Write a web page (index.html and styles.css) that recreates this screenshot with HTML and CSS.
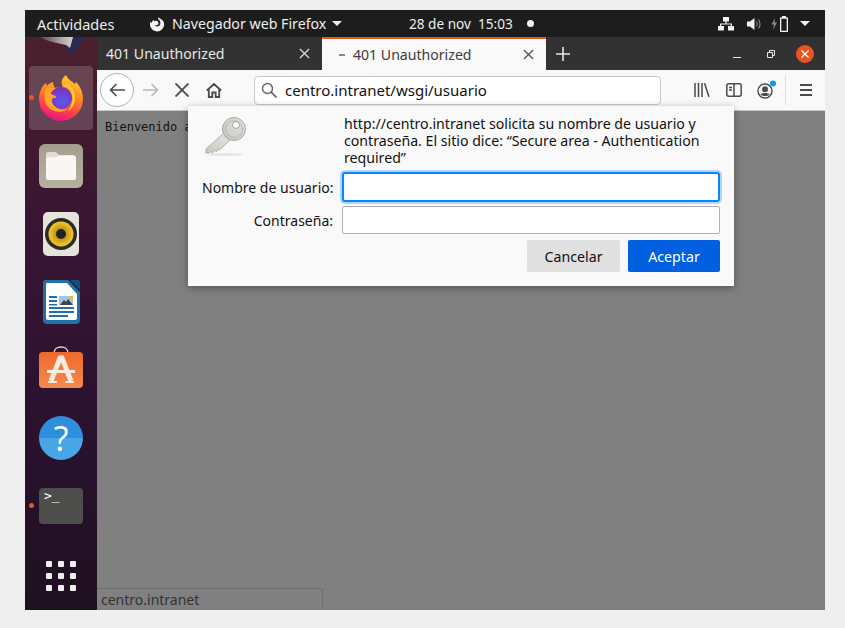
FILE: index.html
```html
<!DOCTYPE html>
<html lang="es">
<head>
    <meta charset="UTF-8">
    <title>401 Unauthorized</title>
    <link rel="stylesheet" href="styles.css">
</head>
<body>
<div class="screen">
    <div class="topbar">
        <span class="activities">Actividades</span>
        <div class="app-menu">
            <svg class="app-icon" width="16" height="16" viewBox="0 0 18 18">
                <path fill="#f2f2f2" d="M9 1.2c.5 1 1.6 1.5 2.4 1.6 1.9 1.2 4.6 3 4.6 6.4a8 8 0 1 1-15.4-2.9c.2 1.100.6 1.500 1.100 1.700.5-2 1.600-3.100 3.100-3.800-.6.700-.7 1.400-.4 2 .7-.8 2.300-1 3.500-.5 1.500.6 2 2.300 1.300 3.600-.8 1.300-2.800 1.700-4.100.8 1.100 2 4.300 2.300 5.800.4 1.700-2.200.7-5.600-1.900-7.100.2-.8.400-1.500.4-2.200z"/>
            </svg>
            <span>Navegador web Firefox</span>
            <span class="caret"></span>
        </div>
        <div class="clock">
            <span>28 de nov&nbsp;&nbsp;15:03</span>
            <span class="clock-dot"></span>
        </div>
        <div class="tray">
            <svg width="16" height="14" viewBox="0 0 16 14"><path fill="#f2f2f2" d="M5 0h6v4.500H8.600V6.500H14v2.500h2v4.500h-6V9h2.800V7.600H3.200V9H6v4.500H0V9h2V6.500h5.400v-2H5z"/></svg>
            <svg width="16" height="14" viewBox="0 0 16 14"><path fill="#f2f2f2" d="M0 4.500h3L7.500 1v12L3 9.500H0z"/><path fill="none" stroke="#8f8f8f" stroke-width="1.100" d="M9.500 4.500c1 1.500 1 3.500 0 5M11.500 2.500c2 2.500 2 6.500 0 9"/></svg>
            <svg class="battery" width="20" height="16" viewBox="0 0 20 16"><path fill="#8a8a8a" d="M4 2 .5 8.500H3L2 14l4-7.500H3.500z"/><path fill="#f2f2f2" fill-rule="evenodd" d="M11 0h4v1.500h2V16H9V1.500h2zM10.300 2.800v11.900h5.400V2.800z"/></svg>
            <span class="caret tray-caret"></span>
        </div>
    </div>

    <div class="desktop">
        <nav class="dock">
            <svg class="dock-peek" width="46" height="16" viewBox="0 0 46 16">
                <defs>
                    <linearGradient id="peekFill" x1="0" y1="0" x2="1" y2="0">
                        <stop offset="0" stop-color="#5d3a48"/>
                        <stop offset="0.6" stop-color="#a89ea2"/>
                        <stop offset="1" stop-color="#d8d2d2"/>
                    </linearGradient>
                </defs>
                <path fill="#2b2a55" d="M28 0h18c-2 7-7 13-14 15-3 0-4-1-5-3 3-3 4-8 1-12z"/>
                <path fill="url(#peekFill)" d="M2 0h33l-3 11-4-3C19 6 8 4 2 0z"/>
            </svg>

            <div class="dock-item active">
                <span class="run-dot"></span>
                <svg width="44" height="46" viewBox="0 0 44 46">
                    <defs>
                        <linearGradient id="ffBody" x1="0.7" y1="0" x2="0.4" y2="1">
                            <stop offset="0" stop-color="#ffd02e"/>
                            <stop offset="0.45" stop-color="#ff8324"/>
                            <stop offset="0.75" stop-color="#ff3e4c"/>
                            <stop offset="1" stop-color="#e31587"/>
                        </linearGradient>
                        <radialGradient id="ffGlobe" cx="0.55" cy="0.65" r="0.65">
                            <stop offset="0" stop-color="#5b5be6"/>
                            <stop offset="0.6" stop-color="#6f3fd6"/>
                            <stop offset="1" stop-color="#8a2cb0"/>
                        </radialGradient>
                    </defs>
                    <path fill="url(#ffBody)" d="M27 0c2 5 6 6 9 9l1-2c4 4 7 10 7 17a22 22 0 0 1-44 0C0 17 3 11 7 8l1 3c1-2 3-3 6-4 0 2 1 4 2 6 3-1 6-1 8-1-3-4-1-9 3-12z"/>
                    <circle cx="22" cy="23" r="11" fill="url(#ffGlobe)"/>
                    <path fill="#ffa62b" d="M7 14c3-2 7-1 9 0-4 2-5 3-4 5 3 1 6 2 5 4-3-1-5 1-4 4 2 6 9 9 16 7-7 5-18 3-22-5-2-5-2-11 0-15z"/>
                    <path fill="#ffc42e" d="M27 8c6 3 10 9 9 17-1 6-4 10-7 11 4-6 5-11 4-16-1-5-4-9-9-9z"/>
                </svg>
            </div>

            <div class="dock-item">
                <svg width="44" height="44" viewBox="0 0 44 44">
                    <defs>
                        <linearGradient id="filesFill" x1="0" y1="0" x2="0" y2="1"><stop offset="0" stop-color="#a39e8e"/><stop offset="1" stop-color="#b5b0a0"/></linearGradient>
                    </defs>
                    <rect width="44" height="44" rx="6" fill="url(#filesFill)"/>
                    <path fill="#dedbd0" d="M7 10a2 2 0 0 1 2-2h8l3 3h15v6H7z"/>
                    <path fill="#f8f7f5" d="M7 15a2 2 0 0 1 2-1.500l8-.5 3-1.500h15a2 2 0 0 1 2 2V34a2 2 0 0 1-2 2H9a2 2 0 0 1-2-2z"/>
                </svg>
            </div>

            <div class="dock-item">
                <svg width="36" height="44" viewBox="0 0 36 44">
                    <defs>
                        <radialGradient id="coneFill"><stop offset="0.3" stop-color="#b98d10"/><stop offset="1" stop-color="#f5ca2c"/></radialGradient>
                    </defs>
                    <rect width="36" height="44" rx="5" fill="#e6e3da"/>
                    <circle cx="18" cy="22" r="16" fill="#2b2b2b"/>
                    <circle cx="18" cy="22" r="12.500" fill="url(#coneFill)"/>
                    <circle cx="18" cy="22" r="5" fill="#222"/>
                </svg>
            </div>

            <div class="dock-item">
                <svg width="37" height="44" viewBox="0 0 37 44">
                    <path fill="#1f72a8" d="M3 0h22l12 12v28a4 4 0 0 1-4 4H4a4 4 0 0 1-4-4V3a3 3 0 0 1 3-3z"/>
                    <path fill="#114f7d" d="M27 0h8a2 2 0 0 1 2 2v8z"/>
                    <path fill="#fff" d="M4 3h20l10 11v24a2 2 0 0 1-2 2H5a2 2 0 0 1-2-2V4z"/>
                    <path fill="#1f72a8" d="M6 16h8v2H6zM6 20h8v2H6zM6 24h8v1.500H6zM6 27h25v2H6zM6 31h25v2H6zM6 35h19v2H6z"/>
                    <rect x="16" y="16" width="14" height="9" fill="#9fc7e4"/>
                    <path fill="#444" d="M17 25l4-5 2 2 2-3 5 6z"/>
                    <rect x="27" y="16" width="3" height="3" fill="#f2b632"/>
                </svg>
            </div>

            <div class="dock-item software">
                <svg width="44" height="42" viewBox="0 0 44 42">
                    <defs>
                        <linearGradient id="bagFill" x1="0" y1="0" x2="0" y2="1"><stop offset="0" stop-color="#ee6a2b"/><stop offset="1" stop-color="#f58a4e"/></linearGradient>
                    </defs>
                    <path fill="none" stroke="#f2d6b8" stroke-width="1.500" d="M15 7c0-8 14-8 14 0"/>
                    <rect y="6" width="44" height="36" rx="4" fill="url(#bagFill)"/>
                    <path fill="none" stroke="#fbe9df" stroke-width="5" d="M12 35 21 12h2l9 23"/>
                    <path fill="#fbe9df" d="M8 24h28v3H8zM9 35h9v2H9zM26 35h9v2h-9z"/>
                </svg>
            </div>

            <div class="dock-item">
                <div class="help-icon">?</div>
            </div>

            <div class="dock-item">
                <span class="run-dot"></span>
                <div class="term-icon">&gt;_</div>
            </div>

            <div class="apps-grid">
                <span></span><span></span><span></span>
                <span></span><span></span><span></span>
                <span></span><span></span><span></span>
            </div>
        </nav>

        <main class="browser">
            <div class="tabbar">
                <div class="tab">
                    <span class="tab-title">401 Unauthorized</span>
                    <svg class="tab-x" width="11" height="11" viewBox="0 0 12 12"><path stroke="#d5d5d5" stroke-width="1.500" d="M1 1l10 10M11 1 1 11"/></svg>
                </div>
                <div class="tab selected">
                    <span class="tab-busy"></span>
                    <span class="tab-title">401 Unauthorized</span>
                    <svg class="tab-x" width="11" height="11" viewBox="0 0 12 12"><path stroke="#555" stroke-width="1.500" d="M1 1l10 10M11 1 1 11"/></svg>
                </div>
                <svg class="new-tab" width="14" height="14" viewBox="0 0 14 14"><path stroke="#e8e8e8" stroke-width="1.600" d="M7 0v14M0 7h14"/></svg>
                <div class="win-controls">
                    <svg width="8" height="8" viewBox="0 0 8 8"><path stroke="#e8e8e8" d="M0 7.500h8"/></svg>
                    <svg width="8" height="8" viewBox="0 0 8 8"><path fill="none" stroke="#e8e8e8" d="M.5 2.500h5v5h-5zM2.500 2V.5h5v5H6"/></svg>
                    <div class="win-close">
                        <svg width="8" height="8" viewBox="0 0 8 8"><path stroke="#fff" stroke-width="1.200" d="M.5.5l7 7M7.500.5l-7 7"/></svg>
                    </div>
                </div>
            </div>

            <div class="toolbar">
                <div class="back-btn">
                    <svg width="16" height="14" viewBox="0 0 16 14"><path fill="none" stroke="#4a4a4f" stroke-width="1.600" d="M16 7H1.500M7.500 1l-6 6 6 6"/></svg>
                </div>
                <svg class="tool-forward" width="16" height="14" viewBox="0 0 16 14"><path fill="none" stroke="#b8b8b8" stroke-width="1.600" d="M0 7h14.500M8.500 1l6 6-6 6"/></svg>
                <svg class="tool-stop" width="14" height="14" viewBox="0 0 14 14"><path stroke="#4a4a4f" stroke-width="1.800" d="M.5.500l13 13M13.500.500l-13 13"/></svg>
                <svg class="tool-home" width="16" height="15" viewBox="0 0 16 15"><path fill="none" stroke="#4a4a4f" stroke-width="1.800" d="M.8 7.500 8 1l7.200 6.500M2.800 6.500V14h3.500V9.500h3.400V14h3.500V6.500"/></svg>
                <div class="urlbar">
                    <svg width="16" height="16" viewBox="0 0 16 16"><circle cx="6.500" cy="6.500" r="5" fill="none" stroke="#6a6a6a" stroke-width="1.500"/><path stroke="#6a6a6a" stroke-width="1.800" d="m10 10 5.500 5.500"/></svg>
                    <span>centro.intranet/wsgi/usuario</span>
                </div>
                <div class="tool-right">
                    <svg width="16" height="14" viewBox="0 0 16 14"><path stroke="#4a4a4f" stroke-width="1.500" d="M1 0v14M4.500 0v14M8 0v14M10.500.300l4.500 13.500"/></svg>
                    <svg class="tool-sidebar" width="16" height="14" viewBox="0 0 16 14"><rect x=".8" y=".8" width="14.400" height="12.400" rx="2" fill="none" stroke="#4a4a4f" stroke-width="1.500"/><path stroke="#4a4a4f" stroke-width="1.500" d="M8 1v12M3 4.500h3M3 7h3"/></svg>
                    <svg class="tool-account" width="20" height="20" viewBox="0 0 20 20"><circle cx="8" cy="11" r="7" fill="none" stroke="#4a4a4f" stroke-width="1.400"/><circle cx="8" cy="9.300" r="3" fill="#4a4a4f"/><path fill="#4a4a4f" d="M3.500 14.500c1-2 8-2 9 0-2 2-7 2-9 0z"/><circle cx="16" cy="3.500" r="3" fill="#0a9bf0"/></svg>
                    <span class="tool-sep"></span>
                    <svg class="tool-menu" width="12" height="12" viewBox="0 0 12 12"><path stroke="#4a4a4f" stroke-width="1.800" d="M0 1h12M0 6h12M0 11h12"/></svg>
                </div>
            </div>

            <div class="content">
                <pre class="page-text">Bienvenido a</pre>

                <div class="auth-dialog">
                    <div class="key-cell">
                        <svg width="50" height="50" viewBox="0 0 50 50">
                            <defs>
                                <linearGradient id="keyFill" x1="1" y1="0" x2="0" y2="1"><stop offset="0" stop-color="#e6e6e2"/><stop offset="1" stop-color="#c9c9c3"/></linearGradient>
                            </defs>
                            <ellipse cx="24" cy="42.500" rx="18" ry="1.500" fill="#e4e4e4"/>
                            <path fill="url(#keyFill)" stroke="#a0a09a" stroke-width=".8" d="M24 20 5 37v4h3l1.500-1.500L11.500 41l2-2.500 2 1L17 37l2 .5L30 27z"/>
                            <circle cx="33" cy="17" r="11.500" fill="url(#keyFill)" stroke="#a5a5a0"/>
                            <circle cx="33" cy="17" r="8.500" fill="none" stroke="#b5b5b0" stroke-width="2" stroke-dasharray="1 1"/>
                            <circle cx="35" cy="13" r="3.500" fill="#f9f9f9" stroke="#8f8f8a" stroke-width=".8"/>
                        </svg>
                    </div>
                    <p class="auth-msg">http://centro.intranet solicita su nombre de usuario y contraseña. El sitio dice: “Secure area - Authentication required”</p>
                    <label class="auth-label" for="user">Nombre de usuario:</label>
                    <input class="auth-input focused" id="user" type="text">
                    <label class="auth-label" for="pass">Contraseña:</label>
                    <input class="auth-input" id="pass" type="text">
                    <div class="auth-buttons">
                        <button class="btn">Cancelar</button>
                        <button class="btn primary">Aceptar</button>
                    </div>
                </div>

                <div class="status-panel">centro.intranet</div>
            </div>
        </main>
    </div>
</div>
</body>
</html>
```

FILE: styles.css
```css
* { box-sizing: border-box; }
html, body { margin: 0; height: 100%; }
body {
    background-color: #efefef;
    padding: 10px 20px 18px 25px;
    font-family: "Noto Sans", "Open Sans", sans-serif;
    font-size: 14px;
    overflow: hidden;
}
.screen { width: 800px; height: 600px; display: flex; flex-direction: column; overflow: hidden; }

/* top bar */
.topbar {
    height: 27px;
    flex: none;
    background-color: #1d1d1d;
    color: #eeeeec;
    display: flex;
    align-items: center;
    padding-left: 12px;
}
.activities { width: 113px; font-size: 14.5px; }
.app-menu { width: 259px; display: flex; align-items: center; gap: 6px; font-size: 14.2px; }
.caret { width: 0; height: 0; border: 5px solid transparent; border-top: 5px solid #f2f2f2; border-bottom: 0; }
.clock { display: flex; align-items: center; gap: 14px; font-size: 13.6px; }
.clock-dot { width: 7px; height: 7px; border-radius: 50%; background-color: #f2f2f2; }
.tray { margin-left: auto; padding-right: 15px; display: flex; align-items: center; gap: 13px; }
.battery { margin-left: -5px; }
.tray-caret { margin-left: -4px; }

.desktop { flex: 1; display: flex; min-height: 0; }

/* dock */
.dock {
    width: 72px;
    flex: none;
    background: linear-gradient(#4b1f2c, #3a1633 30%, #2b1230 65%, #1f1020);
    display: flex;
    flex-direction: column;
    align-items: center;
}
.dock-peek { flex: none; margin-bottom: 13px; }
.dock-item {
    width: 64px;
    height: 64px;
    flex: none;
    margin-bottom: 4px;
    border-radius: 4px;
    display: flex;
    align-items: center;
    justify-content: center;
    position: relative;
}
.dock-item.active { background-color: rgba(255, 255, 255, 0.18); }
.dock-item.software { align-items: flex-start; padding-top: 8px; }
.run-dot { position: absolute; left: 0; top: 29px; width: 5px; height: 5px; border-radius: 50%; background-color: #e95420; }
.help-icon {
    width: 44px;
    height: 44px;
    border-radius: 50%;
    background: linear-gradient(#2f8fdc 50%, #48a5e6 50%);
    color: #fff;
    font-family: "Open Sans", sans-serif;
    font-size: 34px;
    line-height: 44px;
    text-align: center;
}
.term-icon {
    width: 44px;
    height: 36px;
    border-radius: 4px;
    background-color: #4d4d4b;
    color: #fff;
    font-family: "DejaVu Sans Mono", monospace;
    font-size: 13px;
    line-height: 14px;
    padding: 1px 5px;
}
.apps-grid { display: grid; grid-template-columns: repeat(3, 6px); gap: 6px; margin-top: 19px; }
.apps-grid span { width: 6px; height: 6px; border-radius: 1px; background-color: #eeeeee; }

/* browser */
.browser { flex: 1; display: flex; flex-direction: column; min-width: 0; }
.tabbar { height: 33px; flex: none; background-color: #333233; display: flex; align-items: center; }
.tab {
    width: 225px;
    height: 100%;
    flex: none;
    display: flex;
    align-items: center;
    padding: 0 12px 0 9px;
    color: #e8e8e8;
    font-size: 14.1px;
}
.tab.selected {
    width: 224px;
    background-color: #f9f9f9;
    border-top: 2px solid #e95420;
    color: #3c3c3f;
    padding: 0 12px 0 17px;
}
.tab-title { flex: 1; }
.tab-busy { width: 6px; height: 2px; background-color: #888; margin-right: 8px; }
.new-tab { margin-left: 10px; }
.win-controls { margin-left: auto; display: flex; align-items: center; gap: 26px; padding-right: 11px; }
.win-close { width: 18px; height: 18px; margin-left: -5px; border-radius: 50%; background-color: #e95420; display: flex; align-items: center; justify-content: center; }

.toolbar {
    height: 41px;
    flex: none;
    background-color: #f9f9f9;
    border-bottom: 1px solid #c8c8c8;
    display: flex;
    align-items: center;
    padding-left: 3px;
}
.back-btn {
    width: 34px;
    height: 34px;
    border: 1px solid #b1b1b3;
    border-radius: 50%;
    background-color: #fff;
    display: flex;
    align-items: center;
    justify-content: center;
}
.tool-forward { margin-left: 9px; }
.tool-stop { margin-left: 16px; }
.tool-home { margin-left: 17px; }
.urlbar {
    width: 407px;
    height: 29px;
    margin-left: 32px;
    background-color: #fff;
    border: 1px solid #c8c8c8;
    border-radius: 4px;
    display: flex;
    align-items: center;
    gap: 8px;
    padding-left: 6px;
    font-size: 15px;
    color: #111;
}
.tool-right { margin-left: 33px; display: flex; align-items: center; }
.tool-sidebar { margin-left: 16px; }
.tool-account { margin-left: 15px; }
.tool-sep { width: 1px; height: 30px; background-color: #dcdcdc; margin-left: 8px; }
.tool-menu { margin-left: 14px; }

/* page content */
.content { flex: 1; background-color: #808080; position: relative; min-height: 0; }
.page-text { margin: 0; padding: 9px 8px; font-family: "DejaVu Sans Mono", monospace; font-size: 12px; line-height: 14px; color: #111; }
.status-panel {
    position: absolute;
    left: 0;
    bottom: 0;
    width: 226px;
    height: 22px;
    padding: 2px 4px;
    border: 1px solid #6e6e6e;
    border-width: 1px 1px 0 0;
    border-top-right-radius: 3px;
    color: #333;
    line-height: 18px;
}

.auth-dialog {
    position: absolute;
    left: 91px;
    top: -5px;
    width: 546px;
    height: 180px;
    background-color: #f9f9f9;
    box-shadow: 0 2px 8px rgba(0, 0, 0, 0.35);
    padding: 8px 14px 0;
    display: grid;
    grid-template-columns: 131px 378px;
    grid-template-rows: 54px 30px 28px auto;
    column-gap: 9px;
    row-gap: 4px;
    color: #111;
}
.key-cell { margin: -2px 0 0 -1px; }
.auth-msg { margin: 1px 0 0 2px; line-height: 17px; font-size: 14.15px; }
.auth-label { align-self: center; text-align: right; white-space: nowrap; }
.auth-input { width: 100%; height: 100%; background-color: #fff; border: 1px solid #b1b1b1; border-radius: 2px; outline: none; padding: 0 6px; }
.auth-input.focused { border: 2px solid #0a84ff; border-radius: 3px; box-shadow: 0 0 0 2px rgba(10, 132, 255, 0.3); }
.auth-buttons { grid-column: 1 / -1; display: flex; justify-content: flex-end; gap: 8px; margin-top: 2px; }
.btn { width: 93px; height: 32px; border: none; border-radius: 2px; background-color: #e0e0e1; color: #111; font: inherit; font-size: 14.2px; }
.btn.primary { width: 92px; background-color: #0060df; color: #fff; }
```
